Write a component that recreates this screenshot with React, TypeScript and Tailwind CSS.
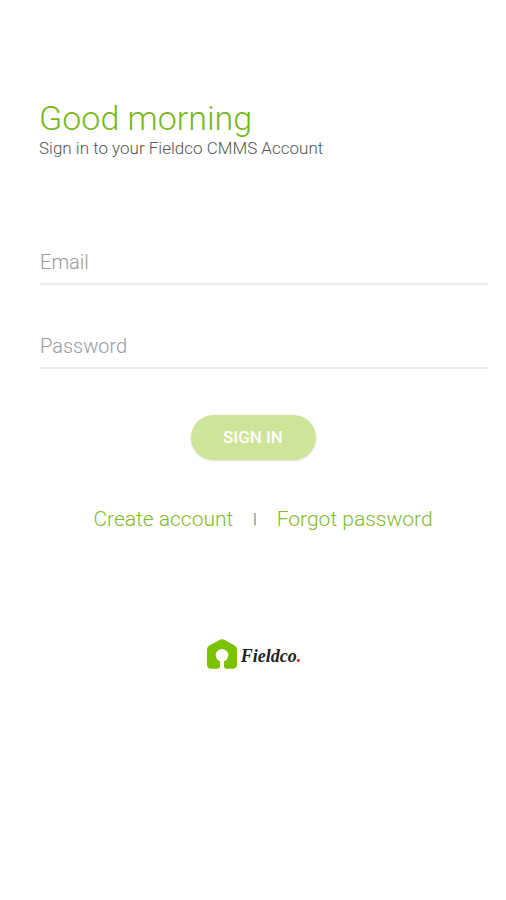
import React, { useState } from "react";

const Field: React.FunctionComponent<{
  id: string;
  label: string;
  type: string;
}> = ({ id, label, type }) => {
  const [value, setValue] = useState("");

  return (
    <div className="grid border-b-2 border-[#ebebeb] text-[20px] font-light">
      <input
        id={id}
        type={type}
        value={value}
        placeholder=" "
        onChange={(e) => setValue(e.target.value)}
        className="peer col-start-1 row-start-1 h-10 w-full bg-transparent text-gray-700 focus:outline-none"
      />
      <label
        htmlFor={id}
        className="pointer-events-none invisible col-start-1 row-start-1 self-center pb-0.5 leading-7 text-[#9a9a9a] peer-placeholder-shown:visible"
      >
        {label}
      </label>
    </div>
  );
};

const Logo: React.FunctionComponent = () => (
  <div className="flex items-center justify-center gap-1">
    <svg viewBox="0 0 30 30" className="h-[30px] w-[30px]" aria-hidden="true">
      <path
        d="M12.8 0.8Q15 -0.4 17.2 0.8L27.6 6.6Q30 8 30 10.6V25.5Q30 29.8 25.7 29.8H19.5Q17 29.8 17 27.5V22.2A6.3 6.3 0 1 0 13 22.2V27.5Q13 29.8 10.5 29.8H4.3Q0 29.8 0 25.5V10.6Q0 8 2.4 6.6Z"
        fill="#7ac200"
      />
    </svg>
    <span className="pt-1 font-['Liberation_Serif',serif] text-[18px] leading-6 font-bold text-[#222222] italic">
      Fieldco<span className="text-[#e8102a]">.</span>
    </span>
  </div>
);

export default function App() {
  return (
    <main className="min-h-screen bg-white pt-[100px] font-['Roboto',sans-serif]">
      <header className="pr-4 pl-[39px]">
        <h1 className="text-[34px] leading-9 font-light text-[#78b71b]">
          Good morning
        </h1>
        <p className="text-[17px] leading-6 font-light text-[#555555]">
          Sign in to your Fieldco CMMS Account
        </p>
      </header>

      <form onSubmit={(e) => e.preventDefault()}>
        <div className="mt-[83px] flex flex-col gap-[42px] pr-[18px] pl-10">
          <Field id="email" label="Email" type="email" />
          <Field id="password" label="Password" type="password" />
        </div>
        <button
          type="submit"
          className="mx-auto mt-[46px] block h-[45px] w-[125px] rounded-full bg-[#cde598] text-[17px] font-medium text-white shadow"
        >
          SIGN IN
        </button>
      </form>

      <div className="mt-[47px] flex items-center justify-center gap-5 pr-5 pl-10 text-[21px] leading-6 font-light text-[#7fba2a]">
        <a href="#create">Create account</a>
        <span className="text-[14px] font-normal text-[#777777]">|</span>
        <a href="#forgot">Forgot password</a>
      </div>

      <div className="mt-[108px] pl-0.5">
        <Logo />
      </div>
    </main>
  );
}
